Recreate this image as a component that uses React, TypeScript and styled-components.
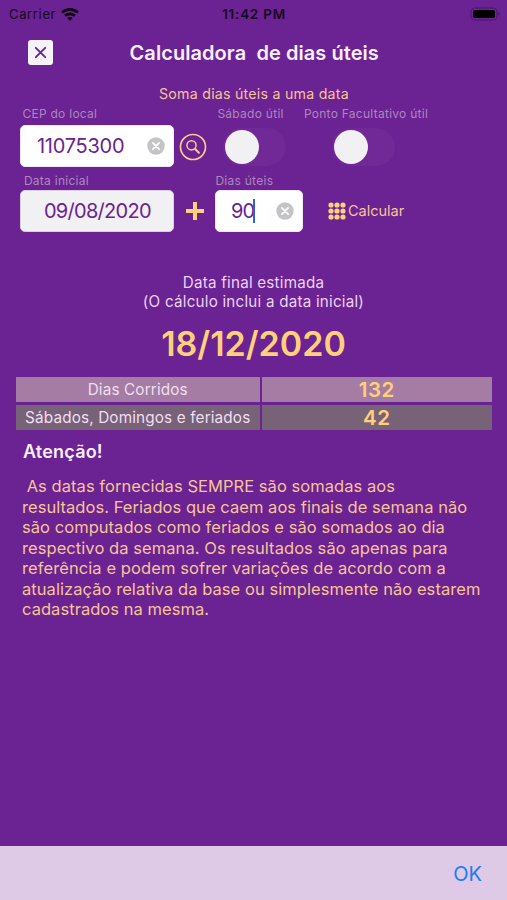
import React from "react";
import styled, { createGlobalStyle } from "styled-components";

const purple = "#6b2292";
const peach = "#f6c596";
const gold = "#ffd07c";

const GlobalStyle = createGlobalStyle`
  * { box-sizing: border-box; }
  body { margin: 0; background: ${purple}; }
  button { border: 0; padding: 0; margin: 0; background: none; font: inherit; color: inherit; }
`;

const Screen = styled.div`
  width: 507px;
  height: 900px;
  display: flex;
  flex-direction: column;
  overflow: hidden;
  background: ${purple};
  font-family: Inter, "Liberation Sans", sans-serif;
  white-space: pre;
`;

const StatusBar = styled.header`
  height: 28px;
  padding: 0 6px 0 9px;
  display: grid;
  grid-template-columns: 1fr auto 1fr;
  align-items: center;
  color: #160720;
  font-size: 13px;
  line-height: 16px;
`;

const Carrier = styled.div`
  display: flex;
  align-items: center;
  gap: 5px;
  letter-spacing: 0.65px;
`;

const Clock = styled.div`
  padding-right: 2px;
  font-size: 13.5px;
  font-weight: 600;
  letter-spacing: 0.75px;
`;

const BatterySlot = styled.div`
  display: flex;
  justify-content: flex-end;
`;

const TitleBar = styled.div`
  height: 49px;
  padding-left: 27.5px;
  display: grid;
  grid-template-columns: 25px 1fr 51px;
  align-items: center;
`;

const CloseButton = styled.button`
  width: 25px;
  height: 25px;
  border-radius: 3px;
  background: #f6f2f8;
  display: flex;
  align-items: center;
  justify-content: center;
`;

const Title = styled.h1`
  margin: 0;
  text-align: center;
  color: #f8effc;
  font-size: 20px;
  font-weight: 600;
  line-height: 26px;
  letter-spacing: 0.06px;
`;

const Subtitle = styled.div`
  height: 30px;
  padding: 8px 0 0 1px;
  text-align: center;
  color: ${peach};
  font-size: 14.2px;
  line-height: 18px;
  letter-spacing: 0.24px;
`;

const Form = styled.form`
  display: grid;
  grid-template-columns: 154px 41px 88px 1fr;
  grid-template-rows: 18px 42px 23px 42px;
  padding-left: 20.4px;
`;

const Label = styled.label<{ $indent?: number }>`
  padding: 3px 0 0 ${(p) => p.$indent ?? 2}px;
  color: #ab87bd;
  font-size: 12px;
  line-height: 15px;
  align-self: center;
  letter-spacing: 0.27px;
`;

const TopLabel = styled(Label)`
  align-self: start;
  padding-top: 0;
  margin-top: -1px;
`;

const Field = styled.div<{ $muted?: boolean; $pad: number }>`
  height: 42px;
  border-radius: 5px;
  border: 1px solid ${(p) => (p.$muted ? "#d9cfdf" : "#efe6f3")};
  background: ${(p) => (p.$muted ? "#f1f0f2" : "#fff")};
  padding: 0 8px 0 ${(p) => p.$pad}px;
  display: flex;
  align-items: center;
  color: ${purple};
  font-size: 20px;
  line-height: 24px;
`;

const Value = styled.span<{ $track?: number }>`
  flex: 1;
  display: flex;
  align-items: center;
  letter-spacing: ${(p) => p.$track ?? 0}px;
`;

const Caret = styled.i`
  width: 2px;
  height: 24px;
  margin-left: -1px;
  background: #315fe0;
`;

const IconCell = styled.div<{ $top?: number }>`
  padding: ${(p) => p.$top ?? 0}px 3px 0 0;
  display: flex;
  align-items: center;
  justify-content: center;
`;

const PlusCell = styled(IconCell)`
  padding-right: 0;
`;

const SwitchCell = styled.div<{ $indent: number }>`
  padding: 1px 0 0 ${(p) => p.$indent}px;
  display: flex;
  align-items: center;
`;

const Track = styled.button`
  width: 63px;
  height: 38px;
  margin-top: 1px;
  padding-left: 2px;
  border-radius: 19px;
  background: #702996;
  display: flex;
  align-items: center;
`;

const Knob = styled.span`
  width: 34px;
  height: 34px;
  border-radius: 50%;
  background: #f1f0f2;
`;

const CalculateButton = styled.button`
  padding-left: 24.6px;
  display: flex;
  align-items: center;
  gap: 2px;
  color: ${peach};
  font-size: 14.5px;
  line-height: 18px;
`;

const Estimate = styled.section`
  height: 145px;
  padding-top: 42px;
  text-align: center;
  color: #ead3f5;
  font-size: 15.2px;
  line-height: 18.5px;
  letter-spacing: 0.22px;
`;

const FinalDate = styled.div`
  margin-top: 12px;
  color: ${gold};
  font-size: 34px;
  font-weight: 600;
  line-height: 42px;
  letter-spacing: 0;
`;

const Totals = styled.div`
  margin: 0 15px 0 15.5px;
  display: grid;
  grid-template-columns: 244.5px 1fr;
  grid-auto-rows: 25px;
  gap: 3px 1.5px;
`;

const Cell = styled.div<{ $dark?: boolean }>`
  background: ${(p) => (p.$dark ? "#786278" : "#a57ca3")};
  color: #f0dff3;
  font-size: 15.3px;
  line-height: 26px;
  letter-spacing: 0.14px;
  text-align: center;
`;

const Count = styled(Cell)`
  color: ${gold};
  font-size: 20.5px;
  font-weight: 600;
  line-height: 26px;
  letter-spacing: 0.5px;
`;

const Notice = styled.section`
  flex: 1;
  padding: 10px 22px 0;
`;

const NoticeTitle = styled.h2`
  margin: 0 0 12px 1px;
  color: #faf0fd;
  font-size: 18px;
  font-weight: 600;
  line-height: 24px;
  letter-spacing: 0.2px;
`;

const NoticeText = styled.p`
  margin: 0;
  color: ${peach};
  font-size: 16.5px;
  line-height: 20.5px;
`;

const Line = styled.span<{ $track?: number }>`
  display: block;
  letter-spacing: ${(p) => p.$track ?? 0}px;
`;

const Footer = styled.footer`
  height: 54px;
  padding: 1px 25px 0 0;
  display: flex;
  align-items: center;
  justify-content: flex-end;
  background: #dec9e7;
  color: #1b7df0;
  font-size: 20px;
  line-height: 24px;
`;

const Wifi = () => (
  <svg width="18" height="13" viewBox="0 0 18 13" fill="none" stroke="#0b0310" strokeWidth="2.6">
    <path d="M1.1 4.5C5.5.3 12.5.3 16.9 4.5M4.1 7.8c2.8-2.6 7-2.6 9.8 0" />
    <path d="M6.3 9.9c1.5-1.3 3.9-1.3 5.4 0L9 12.7Z" fill="#0b0310" stroke="none" />
  </svg>
);

const Battery = () => (
  <svg width="31" height="14" viewBox="0 0 31 14">
    <rect x="1" y="1" width="26" height="12" rx="3.5" fill="none" stroke="#4b1767" />
    <rect x="3" y="3" width="22" height="8" rx="1.8" fill="#000" />
    <path d="M28.5 5v4c1.6-.7 1.6-3.3 0-4Z" fill="#4b1767" />
  </svg>
);

const Cross = () => (
  <svg width="13" height="13" viewBox="0 0 13 13" stroke={purple} strokeWidth="1.9" strokeLinecap="round">
    <path d="M1.8 1.8l9.4 9.4M11.2 1.8l-9.4 9.4" />
  </svg>
);

const Clear = () => (
  <svg width="18" height="18" viewBox="0 0 18 18">
    <circle cx="9" cy="9" r="8.7" fill="#c4c3c6" />
    <path d="M5.9 5.9l6.2 6.2M12.1 5.9l-6.2 6.2" stroke="#fff" strokeWidth="1.8" strokeLinecap="round" />
  </svg>
);

const Search = () => (
  <svg width="28" height="28" viewBox="0 0 28 28" fill="none" stroke="#fcc98a">
    <circle cx="14" cy="14" r="12.5" strokeWidth="1.7" />
    <circle cx="12.5" cy="12.3" r="4.6" strokeWidth="1.5" />
    <path d="M15.9 15.8l4 4" strokeWidth="2" strokeLinecap="round" />
  </svg>
);

const Plus = () => (
  <svg width="18" height="18" viewBox="0 0 18 18" stroke={gold} strokeWidth="4">
    <path d="M9 0v18M0 9h18" />
  </svg>
);

const dots = [3, 9, 15];
const Keypad = () => (
  <svg width="18" height="18" viewBox="0 0 18 18" fill={gold}>
    {dots.map((y) => dots.map((x) => <circle key={`${x}-${y}`} cx={x} cy={y} r="2.6" />))}
  </svg>
);

const notice: [string, number][] = [
  [" As datas fornecidas SEMPRE são somadas aos", 0.05],
  ["resultados. Feriados que caem aos finais de semana não", 0.05],
  ["são computados como feriados e são somados ao dia", 0.05],
  ["respectivo da semana. Os resultados são apenas para", 0.07],
  ["referência e podem sofrer variações de acordo com a", 0.09],
  ["atualização relativa da base ou simplesmente não estarem", 0.06],
  ["cadastrados na mesma.", 0.05],
];

export default function App() {
  return (
    <>
      <GlobalStyle />
      <Screen>
        <StatusBar>
          <Carrier>
            Carrier
            <Wifi />
          </Carrier>
          <Clock>11:42 PM</Clock>
          <BatterySlot>
            <Battery />
          </BatterySlot>
        </StatusBar>
        <TitleBar>
          <CloseButton aria-label="Fechar">
            <Cross />
          </CloseButton>
          <Title>Calculadora  de dias úteis</Title>
        </TitleBar>
        <Subtitle>Soma dias úteis a uma data</Subtitle>
        <Form onSubmit={(e) => e.preventDefault()}>
          <TopLabel>CEP do local</TopLabel>
          <span />
          <TopLabel>Sábado útil</TopLabel>
          <TopLabel $indent={0.5}>Ponto Facultativo útil</TopLabel>

          <Field $pad={15.5}>
            <Value $track={-0.25}>11075300</Value>
            <Clear />
          </Field>
          <IconCell $top={2}>
            <Search />
          </IconCell>
          <SwitchCell $indent={7.6}>
            <Track type="button" aria-label="Sábado útil">
              <Knob />
            </Track>
          </SwitchCell>
          <SwitchCell $indent={28.6}>
            <Track type="button" aria-label="Ponto Facultativo útil">
              <Knob />
            </Track>
          </SwitchCell>

          <Label $indent={3.5}>Data inicial</Label>
          <span />
          <Label $indent={0}>Dias úteis</Label>
          <span />

          <Field $muted $pad={22.5}>
            <Value $track={-0.7}>09/08/2020</Value>
          </Field>
          <PlusCell>
            <Plus />
          </PlusCell>
          <Field $pad={14.5}>
            <Value $track={-0.8}>
              90
              <Caret />
            </Value>
            <Clear />
          </Field>
          <CalculateButton type="button">
            <Keypad />
            Calcular
          </CalculateButton>
        </Form>
        <Estimate>
          <div>Data final estimada</div>
          <div>(O cálculo inclui a data inicial)</div>
          <FinalDate>18/12/2020</FinalDate>
        </Estimate>
        <Totals>
          <Cell>Dias Corridos</Cell>
          <Count>132</Count>
          <Cell $dark>Sábados, Domingos e feriados</Cell>
          <Count $dark>42</Count>
        </Totals>
        <Notice>
          <NoticeTitle>Atenção!</NoticeTitle>
          <NoticeText>
            {notice.map(([text, track]) => (
              <Line key={text} $track={track}>
                {text}
              </Line>
            ))}
          </NoticeText>
        </Notice>
        <Footer>
          <button type="button">OK</button>
        </Footer>
      </Screen>
    </>
  );
}
